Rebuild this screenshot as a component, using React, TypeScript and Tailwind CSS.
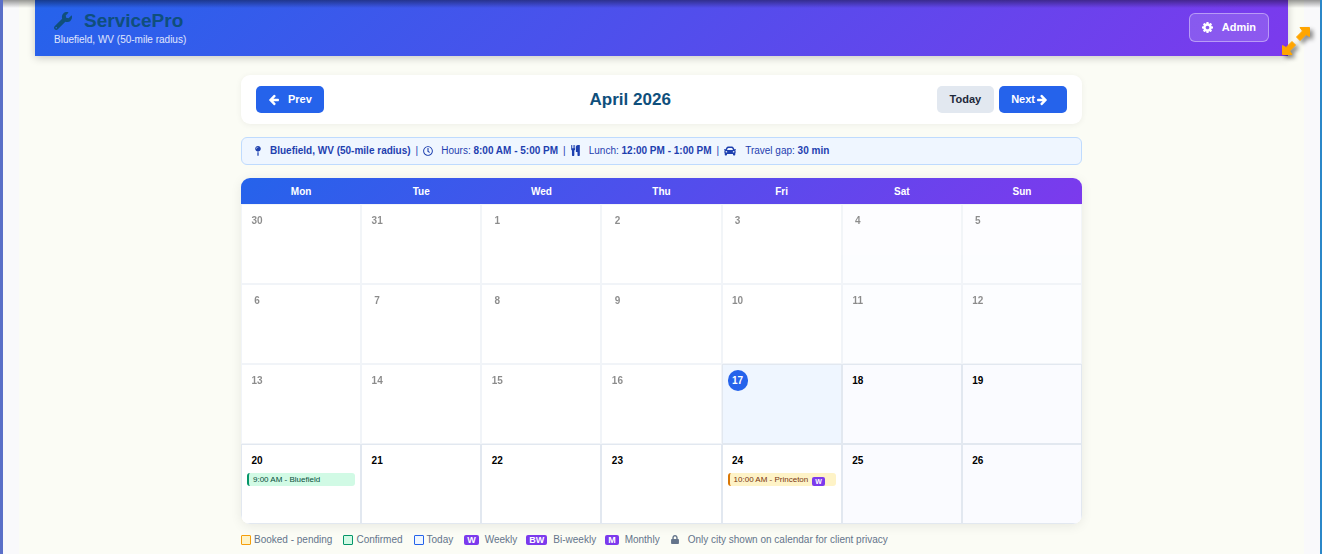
import { FaCar, FaLock, FaMapPin, FaRegClock, FaWrench } from 'react-icons/fa'

interface Booking {
  label: string
  status: 'pending' | 'confirmed'
  repeat?: string
}

interface Day {
  num: number
  past: boolean
  today?: boolean
  booking?: Booking
}

const WEEKDAYS = ['Mon', 'Tue', 'Wed', 'Thu', 'Fri', 'Sat', 'Sun']

const TODAY = 17

const BOOKINGS: Record<number, Booking> = {
  20: { label: '9:00 AM - Bluefield', status: 'confirmed' },
  24: { label: '10:00 AM - Princeton', status: 'pending', repeat: 'W' },
}

// Four weeks starting on Monday, March 30
const WEEKS: Day[][] = [0, 1, 2, 3].map((week) =>
  WEEKDAYS.map((_, i) => {
    const date = week * 7 + i - 1
    if (date < 1) return { num: 31 + date, past: true }
    return { num: date, past: date < TODAY, today: date === TODAY, booking: BOOKINGS[date] }
  })
)

function ArrowIcon({ className }: { className?: string }) {
  return (
    <svg viewBox="0 64 1600 1792" fill="currentColor" className={className} aria-hidden="true">
      <path d="M1536 896v128q0 53-32.5 90.5T1419 1152H715l293 294q38 36 38 90t-38 90l-75 76q-37 37-90 37-52 0-91-37L101 1050q-37-37-37-90 0-52 37-91l651-650q38-38 91-38 52 0 90 38l75 74q38 38 38 91t-38 91L715 768h704q52 0 84.5 37.5T1536 896z" />
    </svg>
  )
}

function CogIcon({ className }: { className?: string }) {
  return (
    <svg viewBox="0 128 1536 1536" fill="currentColor" className={className} aria-hidden="true">
      <path d="M1024 896q0-106-75-181t-181-75-181 75-75 181 75 181 181 75 181-75 75-181zm512-109v222q0 12-8 23t-20 13l-185 28q-19 54-39 91 35 50 107 138 10 12 10 25t-9 23q-27 37-99 108t-94 71q-12 0-26-9l-138-108q-44 23-91 38-16 136-29 186-7 28-36 28H657q-14 0-24.5-8.5T621 1635l-28-184q-49-16-90-37l-141 107q-10 9-25 9-14 0-25-11-126-114-165-168-7-10-7-23 0-12 8-23 15-21 51-66.5t54-70.5q-27-50-41-99L29 1041q-13-2-21-12.5T0 1005V783q0-12 8-23t19-13l186-28q14-46 39-92-40-57-107-138-10-12-10-24 0-10 9-23 26-36 98.5-107.5T337 263q13 0 26 10l138 107q44-23 91-38 16-136 29-186 7-28 36-28h222q14 0 24.5 8.5T915 157l28 184q49 16 90 37l142-107q9-9 24-9 13 0 25 10 129 119 165 170 7 8 7 22 0 12-8 23-15 21-51 66.5t-54 70.5q26 50 41 98l183 28q13 2 21 12.5t8 23.5z" />
    </svg>
  )
}

function CutleryIcon({ className }: { className?: string }) {
  return (
    <svg viewBox="0 0 1408 1792" fill="currentColor" className={className} aria-hidden="true">
      <path d="M640 64v640q0 61-35.5 111t-92.5 70v779q0 52-38 90t-90 38h-128q-52 0-90-38t-38-90v-779q-57-20-92.5-70T0 704V64Q0 38 19 19T64 0t45 19 19 45v416q0 26 19 45t45 19 45-19 19-45V64q0-26 19-45t45-19 45 19 19 45v416q0 26 19 45t45 19 45-19 19-45V64q0-26 19-45t45-19 45 19 19 45zm768 0v1600q0 52-38 90t-90 38h-128q-52 0-90-38t-38-90v-512H800q-13 0-22.5-9.5T768 1120V320q0-132 94-226t226-94h256q26 0 45 19t19 45z" />
    </svg>
  )
}

function ExpandIcon() {
  return (
    <svg
      viewBox="0 0 28 28"
      className="h-7 w-7 overflow-visible drop-shadow-[3px_3px_2px_rgba(0,0,0,0.45)]"
      fill="#ffa500"
      stroke="#ffa500"
      strokeLinejoin="round"
      aria-hidden="true"
    >
      <path d="M18 0.5H27.500V9.500L24 7.500L18 13.500L14.500 10L20.500 4z" />
      <path d="M10 27.500H0.500V18.500L4 20.500L10 14.500L13.500 18L7.500 24z" />
    </svg>
  )
}

function DayCell({ day, weekend }: { day: Day; weekend: boolean }) {
  const bg = day.today ? 'bg-[#eff6ff]' : weekend ? 'bg-[#fafbff]' : 'bg-white'
  const { booking } = day

  return (
    <td className={`h-20 border border-[#e2e8f0] p-[5px] align-top ${bg} ${day.past ? 'opacity-45' : ''}`}>
      <div
        className={`flex h-[21px] w-5 items-center justify-center rounded-full text-[10px] font-bold ${
          day.today ? 'bg-[#2563eb] text-white' : 'text-black'
        }`}
      >
        {day.num}
      </div>
      {booking && (
        <div
          className={`mt-0.5 h-[13px] truncate rounded-[3px] border-l-2 pl-1 text-[8px] leading-[13px] ${
            booking.status === 'confirmed'
              ? 'border-[#059669] bg-[#d1fae5] text-[#064e3b]'
              : 'border-[#d97706] bg-[#fef3c7] text-[#78350f]'
          }`}
        >
          {booking.label}
          {booking.repeat && (
            <span className="ml-1 inline-block rounded-[2px] bg-[#7c3aed] px-[3px] align-[-2px] text-[7px] leading-[9px] font-bold text-white">
              {booking.repeat}
            </span>
          )}
        </div>
      )}
    </td>
  )
}

function Swatch({ className }: { className: string }) {
  return <span className={`mr-[3px] h-[10px] w-[10px] rounded-[1px] border ${className}`} />
}

function Tag({ children }: { children: string }) {
  return (
    <span className="mr-[6px] rounded-[2px] bg-[#7c3aed] px-[3px] text-[9px] leading-[10px] font-bold text-white">
      {children}
    </span>
  )
}

export default function App() {
  return (
    <div className="relative min-h-screen overflow-hidden border-r-2 border-l-3 border-r-[#2b87c8] border-l-[#5a6fc8] bg-[#f9f9fb] px-4 font-['Liberation_Sans',Arial,sans-serif]">
      <div className="min-h-screen bg-[#fbfcf5] px-4 pb-2">
        <header className="flex h-14 items-center justify-between bg-[linear-gradient(135deg,#2563eb,#7c3aed)] px-[19px] shadow-[0_2px_8px_rgba(0,0,0,0.2)]">
          <div className="pb-px">
            <h1 className="flex items-center text-[19px] leading-6 font-bold text-[#0f4f7c]">
              <FaWrench className="mr-3 h-[18px] w-[18px]" />
              ServicePro
            </h1>
            <p className="text-[10px] leading-[14px] text-white/85">Bluefield, WV (50-mile radius)</p>
          </div>
          <button
            type="button"
            className="mb-px flex h-[29px] items-center rounded-md border border-white/40 bg-white/15 px-3 text-[11px] font-bold text-white"
          >
            <CogIcon className="mr-[9px] h-[11px] w-[11px]" />
            Admin
          </button>
        </header>

        <main className="mx-auto mt-[19px] max-w-[841px]">
          <div className="flex items-center justify-between rounded-[9px] bg-white px-[15px] py-[11px] shadow-[0_1px_6px_rgba(0,0,0,0.06)]">
            <button
              type="button"
              className="flex h-[27px] items-center rounded-[5px] bg-[#2563eb] px-3 text-[11px] font-bold text-white"
            >
              <ArrowIcon className="mr-2 h-3 w-3" />
              Prev
            </button>
            <h2 className="text-[17px] leading-5 font-bold text-[#0f4f7c]">April 2026</h2>
            <div className="flex gap-[5px]">
              <button type="button" className="h-[27px] rounded-[5px] bg-[#e2e8f0] px-[13px] text-[11px] font-bold text-[#1e293b]">
                Today
              </button>
              <button
                type="button"
                className="flex h-[27px] items-center rounded-[5px] bg-[#2563eb] px-3 text-[11px] font-bold text-white"
              >
                Next
                <ArrowIcon className="mr-[7px] ml-px h-3 w-3 rotate-180" />
              </button>
            </div>
          </div>

          <div className="mt-[13px] flex h-7 items-center rounded-md border border-[#bfdbfe] bg-[#eff6ff] px-3 pb-px text-[10px] text-[#1e40af]">
            <FaMapPin className="mr-2 h-[10px] w-2" />
            <strong>Bluefield, WV (50-mile radius)</strong>
            <span className="mx-[5px]">|</span>
            <FaRegClock className="mr-2 h-[10px] w-[10px]" />
            <span>
              Hours: <strong>8:00 AM - 5:00 PM</strong>
            </span>
            <span className="mx-[5px]">|</span>
            <CutleryIcon className="mr-[9px] h-[11px] w-[9px]" />
            <span>
              Lunch: <strong>12:00 PM - 1:00 PM</strong>
            </span>
            <span className="mx-[5px]">|</span>
            <FaCar className="mr-[9px] h-3 w-3" />
            <span>
              Travel gap: <strong>30 min</strong>
            </span>
          </div>

          <div className="mt-[13px] overflow-hidden rounded-[9px] bg-white shadow-[0_2px_12px_rgba(0,0,0,0.08)]">
            <table className="w-full table-fixed border-separate border-spacing-0">
              <thead>
                <tr className="bg-[linear-gradient(135deg,#2563eb,#7c3aed)]">
                  {WEEKDAYS.map((name) => (
                    <th key={name} scope="col" className="h-[26px] p-0 text-center text-[10px] font-bold text-white">
                      {name}
                    </th>
                  ))}
                </tr>
              </thead>
              <tbody>
                {WEEKS.map((week, w) => (
                  <tr key={w}>
                    {week.map((day, i) => (
                      <DayCell key={day.num} day={day} weekend={i > 4} />
                    ))}
                  </tr>
                ))}
              </tbody>
            </table>
          </div>

          <div className="mt-[9px] flex h-[13px] items-center gap-[11px] text-[10px] whitespace-nowrap text-[#64748b]">
            <span className="flex items-center">
              <Swatch className="border-[#f59e0b] bg-[#fef3c7]" />
              Booked - pending
            </span>
            <span className="flex items-center">
              <Swatch className="border-[#059669] bg-[#d1fae5]" />
              Confirmed
            </span>
            <span className="flex items-center">
              <Swatch className="border-[#2563eb] bg-[#eff6ff]" />
              Today
            </span>
            <span className="flex items-center gap-[9px]">
              <span className="flex items-center">
                <Tag>W</Tag>
                Weekly
              </span>
              <span className="flex items-center">
                <Tag>BW</Tag>
                Bi-weekly
              </span>
              <span className="flex items-center">
                <Tag>M</Tag>
                Monthly
              </span>
            </span>
            <span className="flex items-center">
              <FaLock className="mr-[9px] h-[9px] w-2" />
              Only city shown on calendar for client privacy
            </span>
          </div>
        </main>
      </div>

      <div className="pointer-events-none absolute inset-x-0 top-0 h-2 bg-gradient-to-b from-black/40 to-transparent" />
      <button type="button" aria-label="Expand" className="absolute top-[27px] right-[10px]">
        <ExpandIcon />
      </button>
    </div>
  )
}
